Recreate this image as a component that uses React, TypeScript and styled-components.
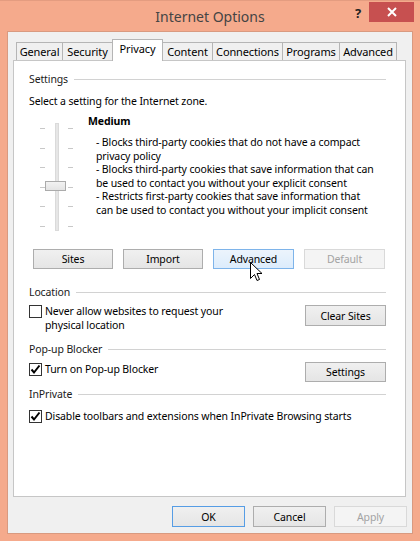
import React from 'react';
import styled, { createGlobalStyle, css } from 'styled-components';

const Global = createGlobalStyle`
  html, body { margin: 0; padding: 0; }
  body {
    width: 420px; height: 541px; overflow: hidden;
    background: #f5aa8c;
    font-family: "Noto Sans", "DejaVu Sans", sans-serif;
    font-size: 10.5px;
    letter-spacing: -0.12px;
    color: #000;
  }
`;

const Window = styled.div`
  position: relative;
  width: 420px;
  height: 541px;
  box-sizing: border-box;
  background: #f5aa8c;
  border-top: 1px solid #e49c80;
  display: flex;
  flex-direction: column;
`;

const TitleBar = styled.div`
  height: 30px;
  display: grid;
  grid-template-columns: 1fr auto 1fr;
  align-items: start;
`;

const Title = styled.div`
  grid-column: 2;
  font-size: 14px;
  letter-spacing: 0;
  line-height: 20px;
  padding-top: 6px;
  color: #444;
`;

const Controls = styled.div`
  grid-column: 3;
  justify-self: end;
  display: flex;
  align-items: flex-start;
  padding-right: 6px;
`;

const Help = styled.div`
  font-size: 13px;
  font-weight: bold;
  color: #222;
  line-height: 16px;
  margin-top: 4px;
  margin-right: 8px;
`;

const Close = styled.div`
  width: 45px;
  height: 20px;
  margin-top: 1px;
  background: #c75050;
  color: #fff;
  display: flex;
  align-items: center;
  justify-content: center;
`;

const Client = styled.div`
  flex: 1;
  margin: 0 7px 7px;
  background: #f0f0f0;
  border: 1px solid #d99a80;
  display: flex;
  flex-direction: column;
`;

const TabStrip = styled.div`
  display: flex;
  align-items: flex-end;
  height: 21px;
  margin: 7px 0 0 8px;
  position: relative;
  z-index: 2;
`;

const Tab = styled.div<{ $w: number; $active?: boolean }>`
  box-sizing: border-box;
  width: ${(p) => p.$w}px;
  height: 18px;
  margin-left: -1px;
  border: 1px solid #b5b5b5;
  border-bottom: none;
  background: #f0f0f0;
  display: flex;
  align-items: center;
  justify-content: center;
  line-height: 14px;
  font-size: 11px;
  &:first-child { margin-left: 0; }
  ${(p) =>
    p.$active &&
    css`
      height: 22px;
      margin-bottom: -1px;
      background: #fff;
      padding-bottom: 3px;
      position: relative;
      z-index: 3;
    `}
`;

const Panel = styled.div`
  box-sizing: border-box;
  height: 437px;
  margin: 0 6px 0 5px;
  background: #fff;
  border: 1px solid #c6c6c6;
  padding: 0 19px 0 15px;
  display: flex;
  flex-direction: column;
`;

const GroupHeader = styled.div<{ $top: number }>`
  display: flex;
  align-items: center;
  gap: 6px;
  height: 14px;
  line-height: 14px;
  margin-top: ${(p) => p.$top}px;
  color: #1a1a1a;
  &::after {
    content: '';
    flex: 1;
    height: 1px;
    background: #d2d2d2;
  }
`;

const Text = styled.div<{ $top?: number }>`
  line-height: 14px;
  margin-top: ${(p) => p.$top ?? 0}px;
`;

const ZoneArea = styled.div`
  display: flex;
  margin-top: 6px;
  height: 118px;
`;

const Slider = styled.div`
  position: relative;
  flex: none;
  width: 33px;
  height: 108px;
  margin: 9px 0 0 11px;
  display: flex;
  justify-content: space-between;
`;

const Ticks = styled.div`
  box-sizing: border-box;
  width: 5px;
  height: 100%;
  padding: 5px 0 4px;
  display: flex;
  flex-direction: column;
  justify-content: space-between;
`;

const Tick = styled.div`
  height: 1px;
  background: #c8c8c8;
`;

const Track = styled.div`
  box-sizing: border-box;
  width: 4px;
  height: 100%;
  background: #e6e6e6;
  border: 1px solid #dadada;
`;

const Thumb = styled.div`
  position: absolute;
  left: 5px;
  top: 58px;
  box-sizing: border-box;
  width: 21px;
  height: 10px;
  background: linear-gradient(#f2f2f2, #e4e4e4);
  border: 1px solid #ababab;
`;

const ZoneText = styled.div`
  margin-left: 15px;
  display: flex;
  flex-direction: column;
`;

const Level = styled.div`
  font-weight: bold;
  line-height: 14px;
`;

const Description = styled.div`
  margin: 8px 0 0 8px;
  line-height: 13.5px;
  white-space: nowrap;
`;

const Line = styled.div``;

const ButtonRow = styled.div<{ $top: number }>`
  display: flex;
  gap: 10px;
  margin: ${(p) => p.$top}px 0 0 4px;
`;

const Button = styled.div<{ $w: number; $h?: number; $hover?: boolean; $disabled?: boolean; $default?: boolean }>`
  box-sizing: border-box;
  width: ${(p) => p.$w}px;
  height: ${(p) => p.$h ?? 21}px;
  display: flex;
  align-items: center;
  justify-content: center;
  border: 1px solid #adadad;
  background: linear-gradient(#f0f0f0, #e5e5e5);
  color: #000;
  line-height: 14px;
  ${(p) =>
    p.$hover &&
    css`
      border-color: #7eb4ea;
      background: linear-gradient(#ecf4fc, #dcecfc);
    `}
  ${(p) =>
    p.$default &&
    css`
      border-color: #569de5;
    `}
  ${(p) =>
    p.$disabled &&
    css`
      border-color: #d9d9d9;
      background: #f4f4f4;
      color: #a3a3a3;
    `}
`;

const OptionRow = styled.div<{ $top: number }>`
  display: flex;
  align-items: flex-start;
  justify-content: space-between;
  margin-top: ${(p) => p.$top}px;
`;

const CheckLabel = styled.div<{ $offset: number }>`
  display: flex;
  align-items: flex-start;
  gap: 3px;
  margin-top: ${(p) => p.$offset}px;
  line-height: 14px;
`;

const Box = styled.div`
  box-sizing: border-box;
  width: 13px;
  height: 13px;
  margin-top: 1px;
  flex: none;
  border: 1px solid #333;
  background: #fff;
  display: flex;
  align-items: center;
  justify-content: center;
`;

const Cursor = styled.svg`
  position: absolute;
  left: 250px;
  top: 261px;
  z-index: 10;
`;

const Footer = styled.div`
  display: flex;
  justify-content: flex-end;
  gap: 8px;
  margin: 9px 5px 0 0;
`;

const Check = () => (
  <svg width="11" height="11" viewBox="0 0 11 11">
    <path d="M1.5 5.5 L4 8.5 L9.5 1.5" fill="none" stroke="#000" strokeWidth="2" />
  </svg>
);

const Checkbox = ({ checked }: { checked?: boolean }) => <Box>{checked && <Check />}</Box>;

export default function App() {
  const tabs: [string, number][] = [
    ['General', 47],
    ['Security', 51],
    ['Privacy', 51],
    ['Content', 51],
    ['Connections', 71],
    ['Programs', 58],
    ['Advanced', 58],
  ];
  return (
    <>
      <Global />
      <Window>
        <TitleBar>
          <Title>Internet Options</Title>
          <Controls>
            <Help>?</Help>
            <Close>
              <svg width="10" height="10" viewBox="0 0 10 10">
                <path d="M1 1 L9 9 M9 1 L1 9" stroke="#fff" strokeWidth="2" />
              </svg>
            </Close>
          </Controls>
        </TitleBar>
        <Client>
          <TabStrip>
            {tabs.map(([t, w]) => (
              <Tab key={t} $w={w} $active={t === 'Privacy'}>
                {t}
              </Tab>
            ))}
          </TabStrip>
          <Panel>
            <GroupHeader $top={11}>Settings</GroupHeader>
            <Text $top={8}>Select a setting for the Internet zone.</Text>
            <ZoneArea>
              <Slider>
                <Ticks>
                  {[0, 1, 2, 3, 4, 5].map((i) => (
                    <Tick key={i} />
                  ))}
                </Ticks>
                <Track />
                <Ticks>
                  {[0, 1, 2, 3, 4, 5].map((i) => (
                    <Tick key={i} />
                  ))}
                </Ticks>
                <Thumb />
              </Slider>
              <ZoneText>
                <Level>Medium</Level>
                <Description>
                  <Line>- Blocks third-party cookies that do not have a compact</Line>
                  <Line>privacy policy</Line>
                  <Line>- Blocks third-party cookies that save information that can</Line>
                  <Line>be used to contact you without your explicit consent</Line>
                  <Line>- Restricts first-party cookies that save information that</Line>
                  <Line>can be used to contact you without your implicit consent</Line>
                </Description>
              </ZoneText>
            </ZoneArea>
            <ButtonRow $top={17}>
              <Button $w={80} $h={20}>Sites</Button>
              <Button $w={80} $h={20}>Import</Button>
              <Button $w={81} $h={20} $hover>Advanced</Button>
              <Button $w={81} $h={20} $disabled>Default</Button>
            </ButtonRow>
            <GroupHeader $top={16}>Location</GroupHeader>
            <OptionRow $top={6}>
              <CheckLabel $offset={-1}>
                <Checkbox />
                <div>
                  Never allow websites to request your
                  <br />
                  physical location
                </div>
              </CheckLabel>
              <Button $w={81}>Clear Sites</Button>
            </OptionRow>
            <GroupHeader $top={10}>Pop-up Blocker</GroupHeader>
            <OptionRow $top={6}>
              <CheckLabel $offset={0}>
                <Checkbox checked />
                <div>Turn on Pop-up Blocker</div>
              </CheckLabel>
              <Button $w={81} $h={20}>Settings</Button>
            </OptionRow>
            <GroupHeader $top={5}>InPrivate</GroupHeader>
            <OptionRow $top={8}>
              <CheckLabel $offset={0}>
                <Checkbox checked />
                <div>Disable toolbars and extensions when InPrivate Browsing starts</div>
              </CheckLabel>
            </OptionRow>
          </Panel>
          <Footer>
            <Button $w={73} $default>OK</Button>
            <Button $w={73}>Cancel</Button>
            <Button $w={73} $disabled>Apply</Button>
          </Footer>
        </Client>
        <Cursor width="13" height="21" viewBox="0 0 13 21">
          <path
            d="M0.5 0.5 L0.5 16.5 L4.5 12.5 L7 18.5 L9.5 17.5 L7 11.5 L12 11.5 Z"
            fill="#fff"
            stroke="#000"
            strokeWidth="1"
            strokeLinejoin="round"
          />
        </Cursor>
      </Window>
    </>
  );
}
